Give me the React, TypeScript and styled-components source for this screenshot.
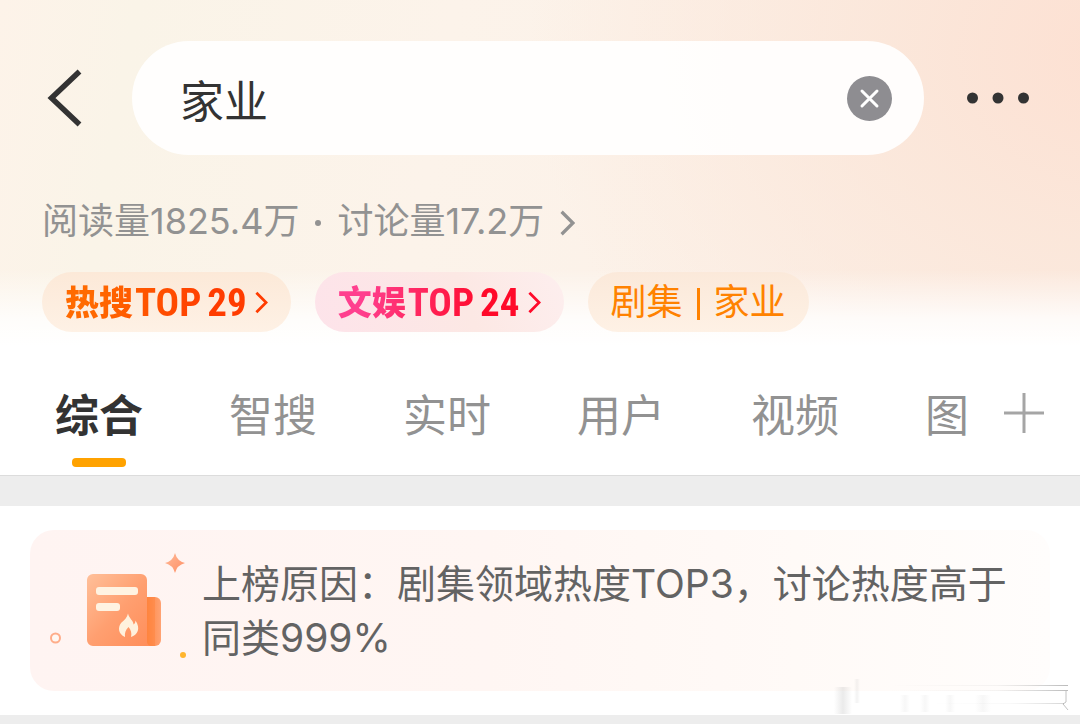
import React from "react";
import styled, { createGlobalStyle } from "styled-components";

const GlobalStyle = createGlobalStyle`
  *, *::before, *::after { box-sizing: border-box; }
  body {
    margin: 0;
    background: #ededed;
    color: #333;
    font-family: Inter, "Noto Sans CJK SC", sans-serif;
  }
  button, input { font: inherit; color: inherit; }
  button { border: 0; padding: 0; background: none; cursor: pointer; }
  a { color: inherit; text-decoration: none; }
  svg { display: block; }
`;

const Header = styled.header`
  display: flex;
  flex-direction: column;
  padding: 41px 42px 14px;
  background:
    linear-gradient(to bottom, rgba(255, 255, 255, 0) 78%, rgba(255, 255, 255, 0.8) 92%, #fff 100%),
    radial-gradient(ellipse 55% 140% at 104% 15%, #fde0d2 0%, rgba(251, 230, 217, 0.9) 40%, rgba(251, 238, 230, 0) 100%),
    linear-gradient(100deg, #fdf3e9 0%, #faf4e8 12%, #fcf3ea 40%, #fbefe6 100%);
`;

const SearchRow = styled.div`
  display: flex;
  align-items: center;
`;

const BackButton = styled.button`
  flex: none;
  width: 90px;
  padding-left: 5px;
`;

const SearchBox = styled.form`
  display: flex;
  flex: 1;
  align-items: center;
  min-width: 0;
  height: 114px;
  padding: 0 32px 0 48px;
  border-radius: 57px;
  background: rgba(255, 255, 255, 0.9);
`;

const SearchInput = styled.input`
  flex: 1;
  min-width: 0;
  height: 64px;
  padding: 2px 0 0;
  border: 0;
  outline: 0;
  background: transparent;
  font-size: 44px;
  line-height: 62px;
`;

const ClearButton = styled.button`
  flex: none;
`;

const MoreButton = styled.button`
  flex: none;
  margin: 0 8px 0 42px;
`;

const Stats = styled.a`
  display: flex;
  align-items: center;
  align-self: flex-start;
  gap: 16px;
  height: 52px;
  margin-top: 40px;
  color: #929292;
  font-size: 36px;
  line-height: 52px;
  white-space: nowrap;

  svg { margin-top: 4px; }
`;

const StatDot = styled.span`
  width: 6px;
  height: 6px;
  margin-top: 4px;
  border-radius: 50%;
  background: currentColor;
`;

const Chips = styled.nav`
  display: flex;
  gap: 24px;
  margin-top: 25px;
`;

const Chip = styled.a<{ $bg: string }>`
  display: flex;
  align-items: center;
  height: 60px;
  padding: 0 23px;
  border-radius: 30px;
  background: ${(p) => p.$bg};
  color: #ff8200;
  font-size: 36px;
  line-height: 60px;
  white-space: nowrap;
`;

const RankText = styled.span<{ $from: string; $to: string }>`
  display: flex;
  align-items: center;
  padding-top: 2px;
  background: linear-gradient(100deg, ${(p) => p.$from} 15%, ${(p) => p.$to} 75%);
  background-clip: text;
  -webkit-background-clip: text;
  color: transparent;
  font-size: 34px;
  font-weight: 900;
  line-height: 58px;
`;

const RankLatin = styled.span`
  display: flex;
  gap: 6px;
  padding: 0 8px 0 2px;
  font-family: "Liberation Sans Narrow", "Roboto Condensed", "Liberation Sans", sans-serif;
  font-size: 39px;
  font-weight: 700;
`;

const Divider = styled.span`
  width: 3px;
  height: 32px;
  margin: 4px 14px 0;
  background: currentColor;
`;

const TabBar = styled.nav`
  display: flex;
  align-items: center;
  justify-content: space-between;
  height: 130px;
  padding: 4px 36px 0 55px;
  border-bottom: 1px solid #dcdcdc;
  background: #fff;
`;

const Tabs = styled.div`
  display: flex;
  align-self: stretch;
  gap: 86px;
  min-width: 0;
  overflow: hidden;
`;

const Tab = styled.button<{ $active?: boolean }>`
  display: flex;
  flex: none;
  flex-direction: column;
  align-items: center;
  gap: 10px;
  padding-top: 34px;
  color: ${(p) => (p.$active ? "#333" : "#929292")};
  font-size: 44px;
  font-weight: ${(p) => (p.$active ? 700 : 400)};
  line-height: 64px;

  &::after {
    content: "";
    flex: none;
    width: ${(p) => (p.$active ? "54px" : "0")};
    height: 9px;
    border-radius: 4px;
    background: #ffa200;
  }
`;

const AddButton = styled.button`
  flex: none;
`;

const Feed = styled.main`
  position: relative;
  margin: 30px 0 9px;
  padding: 24px 30px;
  background: #fff;
`;

const ReasonCard = styled.section`
  display: flex;
  align-items: center;
  padding: 16px 32px 15px 10px;
  border-radius: 24px;
  background: linear-gradient(90deg, #fff4f2 0%, #fff6f3 45%, #fffaf7 75%, #fffdfc 100%);
`;

const ReasonArt = styled.svg`
  flex: none;
  width: 162px;
  height: 130px;
`;

const ReasonText = styled.p`
  flex: 1;
  margin: 0;
  color: #636363;
  font-size: 39px;
  line-height: 54px;
`;

const Smudge = styled.svg`
  position: absolute;
  right: 0;
  bottom: 0;
`;

function Chevron({ color, width, height, stroke }: { color: string; width: number; height: number; stroke: number }) {
  return (
    <svg width={width} height={height} viewBox="0 0 14 24" fill="none" aria-hidden="true">
      <path d="M1.5 1.5 12 12 1.5 22.500" stroke={color} strokeWidth={stroke} />
    </svg>
  );
}

const ranks = [
  { topic: "热搜", rank: "29", from: "#ff6a00", to: "#ff3c00", bg: "linear-gradient(#fce9d8, #fef1e5)" },
  { topic: "文娱", rank: "24", from: "#ff3f8e", to: "#ff0a2a", bg: "linear-gradient(70deg, #fde3ea, #fce8e4 60%, #fdeeee)" },
];

const tabs = ["综合", "智搜", "实时", "用户", "视频", "图"];

export default function App() {
  return (
    <>
      <GlobalStyle />
      <Header>
        <SearchRow>
          <BackButton aria-label="返回">
            <svg width="36" height="58" viewBox="0 0 36 58" fill="none">
              <path d="M32.500 2.500 4.500 29l28 26.500" stroke="#333" strokeWidth="5.500" />
            </svg>
          </BackButton>
          <SearchBox onSubmit={(e) => e.preventDefault()}>
            <SearchInput aria-label="搜索" defaultValue="家业" />
            <ClearButton type="reset" aria-label="清除">
              <svg width="45" height="45" viewBox="0 0 45 45">
                <circle cx="22.500" cy="22.500" r="22.500" fill="#8e8d91" />
                <path d="m15 15 15 15M30 15 15 30" stroke="#fff" strokeWidth="3" strokeLinecap="round" />
              </svg>
            </ClearButton>
          </SearchBox>
          <MoreButton aria-label="更多">
            <svg width="64" height="12" viewBox="0 0 64 12" fill="#333">
              <circle cx="6.500" cy="6" r="5.500" />
              <circle cx="32" cy="6" r="5.500" />
              <circle cx="57.500" cy="6" r="5.500" />
            </svg>
          </MoreButton>
        </SearchRow>

        <Stats href="#stats">
          <span>阅读量1825.4万</span>
          <StatDot />
          <span>讨论量17.2万</span>
          <Chevron color="#929292" width={15} height={26} stroke={3} />
        </Stats>

        <Chips>
          {ranks.map((r) => (
            <Chip key={r.topic} href="#rank" $bg={r.bg}>
              <RankText $from={r.from} $to={r.to}>
                {r.topic}
                <RankLatin>
                  <span>TOP</span>
                  <span>{r.rank}</span>
                </RankLatin>
              </RankText>
              <Chevron color={r.to} width={13} height={23} stroke={3} />
            </Chip>
          ))}
          <Chip href="#drama" $bg="linear-gradient(#fbe9da, #fef1e5)">
            剧集
            <Divider />
            家业
          </Chip>
        </Chips>
      </Header>

      <TabBar>
        <Tabs>
          {tabs.map((name, i) => (
            <Tab key={name} $active={i === 0}>
              {name}
            </Tab>
          ))}
        </Tabs>
        <AddButton aria-label="添加">
          <svg width="40" height="40" viewBox="0 0 40 40">
            <path d="M20 0v40M0 20h40" stroke="#a5a5a5" strokeWidth="3" />
          </svg>
        </AddButton>
      </TabBar>

      <Feed>
        <ReasonCard>
          <ReasonArt viewBox="40 546 162 130" aria-hidden="true">
            <defs>
              <linearGradient id="page" x1="0" y1="0" x2="1" y2="1">
                <stop offset="0" stopColor="#ffc09a" />
                <stop offset="0.500" stopColor="#ff9f70" />
                <stop offset="1" stopColor="#ff8d59" />
              </linearGradient>
              <linearGradient id="fold" x1="0" y1="0" x2="1" y2="0">
                <stop offset="0" stopColor="#ff7a2c" />
                <stop offset="1" stopColor="#ffa273" />
              </linearGradient>
              <linearGradient id="spark" x1="0" y1="0" x2="1" y2="1">
                <stop offset="0" stopColor="#ffba98" />
                <stop offset="1" stopColor="#ff8e63" />
              </linearGradient>
            </defs>
            <path d="M140 597h15a6 6 0 0 1 6 6v37a6 6 0 0 1-6 6h-15z" fill="url(#fold)" />
            <path d="M93 574h48a6 6 0 0 1 6 6v61q0 5 5 5H93a6 6 0 0 1-6-6v-60a6 6 0 0 1 6-6z" fill="url(#page)" />
            <path d="M147 598v43q0 5 5 5h3V597h-8z" fill="#ff8038" opacity="0.400" />
            <rect x="96" y="587" width="42" height="8" rx="3" fill="#fff3e2" />
            <rect x="96" y="603" width="24" height="8" rx="3" fill="#fff3e2" />
            <path
              d="M128 613.500c1 5 5.500 7 5.500 11 1.500-1 2-2.500 2-4 5.500 8 2 14.500-4.500 16.500 1-4 0-7-2.500-10-3 3-4 6-3.500 10-7-3-7.500-10-3.500-14.500 3.500-3 5.500-5 6.500-9z"
              fill="#fff1dd"
            />
            <path d="M175 553q2 8 10 10-8 2-10 10-2-8-10-10 8-2 10-10z" fill="url(#spark)" />
            <circle cx="55.500" cy="638" r="4.500" fill="#fff8f3" stroke="#ffad8a" strokeWidth="2" />
            <circle cx="183" cy="655" r="3" fill="#ffb52e" />
          </ReasonArt>
          <ReasonText>上榜原因：剧集领域热度TOP3，讨论热度高于同类999%</ReasonText>
        </ReasonCard>
        <Smudge width="250" height="38" viewBox="0 0 250 38" fill="none" aria-hidden="true">
          <defs>
            <linearGradient id="trail" x1="0" y1="0" x2="1" y2="0">
              <stop offset="0" stopColor="#999" stopOpacity="0" />
              <stop offset="0.600" stopColor="#999" stopOpacity="0.100" />
              <stop offset="1" stopColor="#777" stopOpacity="0.500" />
            </linearGradient>
            <linearGradient id="smear" x1="0" y1="0" x2="1" y2="0">
              <stop offset="0" stopColor="#bbb" stopOpacity="0" />
              <stop offset="0.500" stopColor="#bbb" stopOpacity="0.300" />
              <stop offset="1" stopColor="#bbb" stopOpacity="0" />
            </linearGradient>
          </defs>
          <rect x="4" y="10" width="18" height="27" fill="url(#smear)" />
          <rect x="24" y="2" width="6" height="24" fill="url(#smear)" opacity="0.600" />
          <rect x="70" y="18" width="10" height="17" fill="url(#smear)" opacity="0.400" />
          <rect x="90" y="18" width="10" height="17" fill="url(#smear)" opacity="0.400" />
          <rect x="115" y="18" width="10" height="17" fill="url(#smear)" opacity="0.400" />
          <rect x="145" y="18" width="16" height="17" fill="url(#smear)" opacity="0.400" />
          <rect x="60" y="8" width="178" height="1" fill="url(#trail)" />
          <rect x="60" y="13" width="178" height="1" fill="url(#trail)" />
          <rect x="100" y="26" width="134" height="1" fill="url(#trail)" opacity="0.600" />
          <path d="M236 14v11l-3 2 5 6" stroke="#999" strokeOpacity="0.600" />
        </Smudge>
      </Feed>
    </>
  );
}
